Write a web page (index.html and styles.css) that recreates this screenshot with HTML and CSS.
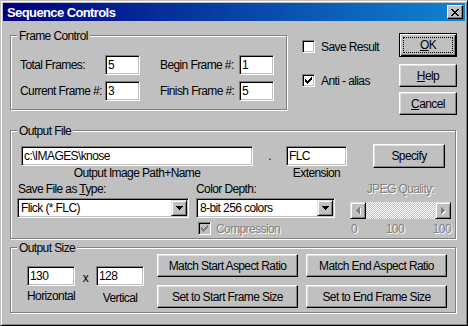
FILE: index.html
```html
<!DOCTYPE html>
<html>
<head>
<meta charset="utf-8">
<title>Sequence Controls</title>
<link rel="stylesheet" href="styles.css">
</head>
<body>
<div class="window">
  <div class="titlebar">
    <span class="title">Sequence Controls</span>
    <span class="close"><svg width="8" height="7" viewBox="0 0 8 7"><path d="M0 0h2v1H0z M6 0h2v1H6z M1 1h2v1H1z M5 1h2v1H5z M2 2h4v1H2z M3 3h2v1H3z M2 4h4v1H2z M1 5h2v1H1z M5 5h2v1H5z M0 6h2v1H0z M6 6h2v1H6z" fill="#000"/></svg></span>
  </div>
  <div class="content">
    <div class="top-row">
      <div class="group frame-group">
        <div class="legend">Frame Control</div>
        <div class="frame-grid">
          <span>Total Frames:</span><div class="field num">5</div>
          <span>Begin Frame #:</span><div class="field num">1</div>
          <span>Current Frame #:</span><div class="field num">3</div>
          <span>Finish Frame #:</span><div class="field num">5</div>
        </div>
      </div>
      <div class="checks">
        <div class="check-row"><span class="checkbox"></span><span>Save Result</span></div>
        <div class="check-row second"><span class="checkbox"><svg width="7" height="7" viewBox="0 0 7 7"><path d="M6 0h1v3H6z M5 1h1v3H5z M4 2h1v3H4z M3 3h1v3H3z M2 4h1v3H2z M1 3h1v3H1z M0 2h1v3H0z" fill="#000"/></svg></span><span>Anti - alias</span></div>
      </div>
      <div class="buttons">
        <div class="btn default"><span class="focus"><u>O</u>K</span></div>
        <div class="btn help"><span><u>H</u>elp</span></div>
        <div class="btn cancel"><span><u>C</u>ancel</span></div>
      </div>
    </div>

    <div class="group output-file">
      <div class="legend">Output File</div>
      <div class="of-row1">
        <div class="path-col">
          <div class="field">c:\IMAGES\knose</div>
          <div class="caption">Output Image Path+Name</div>
        </div>
        <div class="dot">.</div>
        <div class="ext-col">
          <div class="field">FLC</div>
          <div class="caption">Extension</div>
        </div>
        <div class="btn specify"><span>Specify</span></div>
      </div>
      <div class="of-row2">
        <div class="col type-col">
          <div class="lbl">Save File as <u>T</u>ype:</div>
          <div class="field combo"><span class="combo-text">Flick (*.FLC)</span><span class="drop"><svg width="7" height="4" viewBox="0 0 7 4"><path d="M0 0h7v1H0z M1 1h5v1H1z M2 2h3v1H2z M3 3h1v1H3z" fill="#000"/></svg></span></div>
        </div>
        <div class="col depth-col">
          <div class="lbl">Color Depth:</div>
          <div class="field combo"><span class="combo-text">8-bit 256 colors</span><span class="drop"><svg width="7" height="4" viewBox="0 0 7 4"><path d="M0 0h7v1H0z M1 1h5v1H1z M2 2h3v1H2z M3 3h1v1H3z" fill="#000"/></svg></span></div>
          <div class="check-row comp"><span class="checkbox disabled-box"><svg width="7" height="7" viewBox="0 0 7 7"><path d="M6 0h1v3H6z M5 1h1v3H5z M4 2h1v3H4z M3 3h1v3H3z M2 4h1v3H2z M1 3h1v3H1z M0 2h1v3H0z" fill="#808080"/></svg></span><span class="disabled">Compression</span></div>
        </div>
        <div class="col jpeg-col">
          <div class="lbl center disabled">JPEG Quality:</div>
          <div class="scroll">
            <span class="sb-btn"><svg width="5" height="8" viewBox="0 0 5 8"><path transform="translate(1 1)" d="M3 0h1v7H3z M2 1h1v5H2z M1 2h1v3H1z M0 3h1v1H0z" fill="#fff"/><path d="M3 0h1v7H3z M2 1h1v5H2z M1 2h1v3H1z M0 3h1v1H0z" fill="#808080"/></svg></span>
            <span class="track"></span>
            <span class="sb-btn"><svg width="5" height="8" viewBox="0 0 5 8"><path transform="translate(1 1)" d="M0 0h1v7H0z M1 1h1v5H1z M2 2h1v3H2z M3 3h1v1H3z" fill="#fff"/><path d="M0 0h1v7H0z M1 1h1v5H1z M2 2h1v3H2z M3 3h1v1H3z" fill="#808080"/></svg></span>
          </div>
          <div class="ticks disabled"><span>0</span><span>100</span><span>100</span></div>
        </div>
      </div>
    </div>

    <div class="group output-size">
      <div class="legend">Output Size</div>
      <div class="os-row">
        <div class="size-block">
          <div class="size-inputs">
            <div class="field size">130</div>
            <span class="times">x</span>
            <div class="field size">128</div>
          </div>
          <div class="size-captions">
            <span class="cap-h">Horizontal</span>
            <span class="cap-gap"></span>
            <span class="cap-v">Vertical</span>
          </div>
        </div>
        <div class="size-buttons">
          <div class="btn"><span>Match Start Aspect Ratio</span></div>
          <div class="btn"><span>Match End Aspect Ratio</span></div>
          <div class="btn"><span>Set to Start Frame Size</span></div>
          <div class="btn"><span>Set to End Frame Size</span></div>
        </div>
      </div>
    </div>
  </div>
</div>
</body>
</html>
```
FILE: styles.css
```css
* { box-sizing: border-box; }
html, body { margin: 0; padding: 0; }
body {
  width: 468px;
  height: 326px;
  overflow: hidden;
  background: #c0c0c0;
  font-family: "Liberation Sans", Arial, sans-serif;
  font-size: 12px;
  letter-spacing: -0.6px;
  color: #000;
}
u { text-decoration: underline; text-underline-offset: 1px; }

.window {
  width: 468px;
  height: 326px;
  background: #c0c0c0;
  border: 1px solid;
  border-color: #c0c0c0 #000 #000 #c0c0c0;
  box-shadow: inset 1px 1px #fff, inset -1px -1px #808080;
  padding: 2px;
  display: flex;
  flex-direction: column;
}

.titlebar {
  height: 18px;
  flex: none;
  display: flex;
  align-items: center;
  justify-content: space-between;
  padding: 0 2px 0 4px;
  background: linear-gradient(90deg, #000080, #1084d0);
  color: #fff;
  font-weight: bold;
  font-size: 13px;
  letter-spacing: -0.6px;
}
.close {
  width: 16px;
  height: 14px;
  background: #c0c0c0;
  border: 1px solid;
  border-color: #fff #000 #000 #fff;
  box-shadow: inset -1px -1px #808080;
  display: flex;
  align-items: center;
  justify-content: center;
}
.close svg { display: block; }

.content {
  display: flex;
  flex-direction: column;
  padding: 12px 0 0 7px;
}

.group {
  border: 1px solid #808080;
  box-shadow: inset 1px 1px #fff, 1px 1px #fff;
  display: flex;
  flex-direction: column;
  flex: none;
}
.legend {
  align-self: flex-start;
  margin: -7px 0 0 6px;
  padding: 0 2px;
  line-height: 14px;
  height: 14px;
  background: #c0c0c0;
  white-space: nowrap;
}

.field {
  background: #fff;
  border: 1px solid;
  border-color: #808080 #fff #fff #808080;
  box-shadow: inset 1px 1px #000, inset -1px -1px #c0c0c0;
  height: 20px;
  padding: 0 2px;
  line-height: 18px;
  white-space: nowrap;
  overflow: hidden;
}

.btn {
  display: flex;
  align-items: center;
  justify-content: center;
  background: #c0c0c0;
  border: 1px solid;
  border-color: #fff #000 #000 #fff;
  box-shadow: inset -1px -1px #808080, inset 1px 1px #dfdfdf;
  height: 23px;
  white-space: nowrap;
}
.btn.default {
  border-color: #000;
  box-shadow: inset 1px 1px #fff, inset -1px -1px #000, inset -2px -2px #808080;
  height: 24px;
  padding: 3px;
}
.btn.default .focus {
  flex: 1;
  align-self: stretch;
  border: 1px dotted #000;
  display: flex;
  align-items: center;
  justify-content: center;
}

/* top row */
.top-row {
  display: flex;
  align-items: flex-start;
  height: 82px;
  flex: none;
}
.frame-group {
  width: 277px;
  height: 75px;
  margin-top: 2px;
}
.frame-grid {
  display: grid;
  grid-template-columns: 85px 55px 79px 35px;
  row-gap: 6px;
  align-items: center;
  margin: 12px 0 0 9px;
  white-space: nowrap;
}
.field.num { width: 35px; }

.checks {
  width: 97px;
  margin-left: 15px;
  padding-top: 7px;
}
.check-row {
  display: flex;
  align-items: center;
  gap: 6px;
  height: 13px;
  white-space: nowrap;
}
.check-row.second { margin-top: 21px; }
.checkbox {
  width: 13px;
  height: 13px;
  flex: none;
  background: #fff;
  border: 1px solid;
  border-color: #808080 #fff #fff #808080;
  box-shadow: inset 1px 1px #000, inset -1px -1px #c0c0c0;
  display: flex;
  align-items: center;
  justify-content: center;
}
.checkbox svg { display: block; }
.checkbox.disabled-box { background: #c0c0c0; }

.buttons {
  width: 58px;
  display: flex;
  flex-direction: column;
}
.btn.help { margin-top: 7px; }
.btn.cancel { margin-top: 5px; }

/* output file */
.output-file {
  width: 446px;
  height: 109px;
  margin-top: 15px;
}
.of-row1 {
  display: flex;
  align-items: flex-start;
  margin-top: 6px;
}
.path-col {
  width: 232px;
  margin: 2px 0 0 10px;
}
.caption {
  text-align: center;
  line-height: 14px;
  white-space: nowrap;
}
.dot {
  width: 33px;
  margin-top: 2px;
  height: 20px;
  line-height: 20px;
  text-align: center;
}
.ext-col { width: 61px; margin-top: 2px; }
.btn.specify {
  width: 72px;
  height: 24px;
  margin-left: 26px;
}

.of-row2 {
  display: flex;
  align-items: flex-start;
  margin-top: 2px;
}
.col { display: flex; flex-direction: column; }
.lbl {
  line-height: 14px;
  white-space: nowrap;
}
.lbl.center { text-align: center; }
.type-col { width: 172px; margin-left: 6px; }
.type-col .lbl { padding-left: 1px; }
.depth-col { width: 139px; margin-left: 7px; }
.jpeg-col { width: 101px; margin-left: 15px; }
.combo {
  margin-top: 2px;
  display: flex;
  align-items: stretch;
  padding: 1px;
}
.combo-text {
  flex: 1;
  padding-left: 2px;
  line-height: 16px;
  overflow: hidden;
}
.drop {
  width: 16px;
  height: 16px;
  flex: none;
  background: #c0c0c0;
  border: 1px solid;
  border-color: #dfdfdf #000 #000 #dfdfdf;
  box-shadow: inset 1px 1px #fff, inset -1px -1px #808080;
  display: flex;
  align-items: center;
  justify-content: center;
}
.drop svg { display: block; }
.check-row.comp { margin-top: 4px; padding-left: 2px; gap: 5px; }

.disabled {
  color: #808080;
  text-shadow: 1px 1px #fff;
}

.scroll {
  display: flex;
  height: 17px;
  margin-top: 6px;
}
.sb-btn {
  width: 16px;
  flex: none;
  background: #c0c0c0;
  border: 1px solid;
  border-color: #dfdfdf #000 #000 #dfdfdf;
  box-shadow: inset 1px 1px #fff, inset -1px -1px #808080;
  display: flex;
  align-items: center;
  justify-content: center;
}
.sb-btn svg { display: block; }
.track {
  flex: 1;
  background: repeating-conic-gradient(#c0c0c0 0% 25%, #fff 0% 50%) 0 0 / 2px 2px;
}
.ticks {
  display: flex;
  justify-content: space-between;
  line-height: 14px;
  margin-top: 3px;
  padding-left: 1px;
}

/* output size */
.output-size {
  width: 446px;
  height: 66px;
  margin-top: 8px;
}
.os-row {
  display: flex;
  align-items: flex-start;
}
.size-block {
  margin: 11px 0 0 16px;
  width: 117px;
}
.size-inputs {
  display: flex;
  align-items: center;
}
.field.size { width: 48px; }
.times {
  width: 21px;
  text-align: center;
  padding-top: 4px;
}
.size-captions {
  display: flex;
  align-items: flex-start;
  white-space: nowrap;
}
.cap-h { width: 48px; text-align: center; margin-top: 3px; line-height: 14px; }
.cap-gap { width: 21px; }
.cap-v { width: 48px; text-align: center; margin-top: 5px; line-height: 14px; }
.size-buttons {
  display: grid;
  grid-template-columns: 141px 141px;
  column-gap: 8px;
  row-gap: 8px;
  margin: -1px 0 0 13px;
}
```
